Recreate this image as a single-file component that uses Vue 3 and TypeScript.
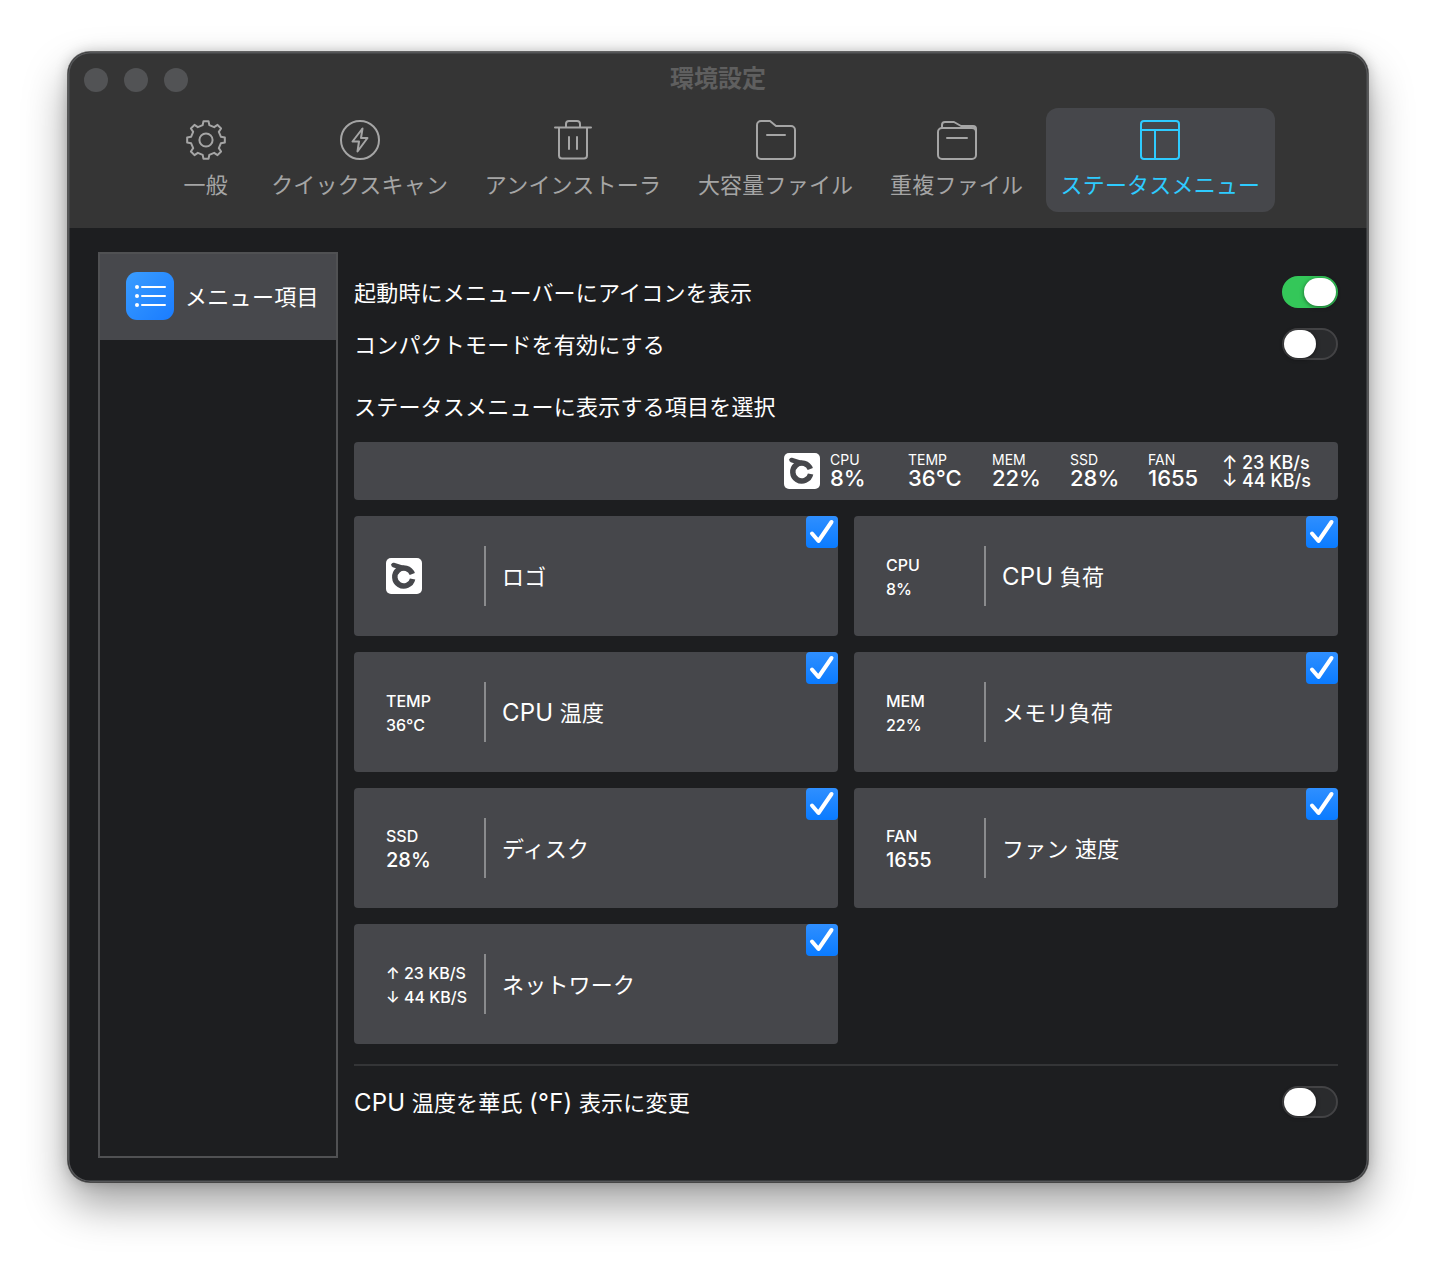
<script setup lang="ts">
interface Tab { label: string; icon: string; active?: boolean; wide?: boolean }
const tabs: Tab[] = [
  { label: '一般', icon: 'gear', wide: true },
  { label: 'クイックスキャン', icon: 'bolt' },
  { label: 'アンインストーラ', icon: 'trash' },
  { label: '大容量ファイル', icon: 'folder' },
  { label: '重複ファイル', icon: 'folders' },
  { label: 'ステータスメニュー', icon: 'layout', active: true },
]
interface Card { name: string; lat?: string; a?: string; b?: string; logo?: boolean; big?: boolean }
const cards: Card[] = [
  { name: 'ロゴ', logo: true },
  { lat: 'CPU', name: ' 負荷', a: 'CPU', b: '8%' },
  { lat: 'CPU', name: ' 温度', a: 'TEMP', b: '36°C' },
  { name: 'メモリ負荷', a: 'MEM', b: '22%' },
  { name: 'ディスク', a: 'SSD', b: '28%', big: true },
  { name: 'ファン 速度', a: 'FAN', b: '1655', big: true },
  { name: 'ネットワーク', a: '↑ 23 KB/S', b: '↓ 44 KB/S' },
]
const stats = [
  { k: 'CPU', v: '8%' },
  { k: 'TEMP', v: '36°C' },
  { k: 'MEM', v: '22%' },
  { k: 'SSD', v: '28%' },
  { k: 'FAN', v: '1655' },
]
function gearPath(): string {
  const cx = 20, cy = 20, n = 8
  const pts: string[] = []
  for (let i = 0; i < n; i++) {
    const base = (i / n) * Math.PI * 2 - Math.PI / 2
    const step = (Math.PI * 2) / n
    const list: [number, number][] = [
      [15.2, base - step * 0.28],
      [19, base - step * 0.17],
      [19, base + step * 0.17],
      [15.2, base + step * 0.28],
    ]
    for (const [r, t] of list) pts.push(`${(cx + r * Math.cos(t)).toFixed(2)} ${(cy + r * Math.sin(t)).toFixed(2)}`)
  }
  return 'M' + pts.join('L') + 'Z'
}
const gear = gearPath()
const logoRing = 'M26.300 16A9 9 0 1 0 26.600 21'
const logoTail = 'M7.500 7 17 10'
</script>

<template>
  <div class="stage">
    <div class="window">
      <header class="head">
        <div class="titlebar">
          <div class="lights"><i></i><i></i><i></i></div>
          <div class="title">環境設定</div>
        </div>
        <nav class="tabs">
          <div v-for="t in tabs" :key="t.label" class="tab" :class="{ active: t.active, wide: t.wide }">
            <svg class="ico" viewBox="0 0 40 40" fill="none" stroke="currentColor" stroke-width="2" stroke-linejoin="round" stroke-linecap="round">
              <template v-if="t.icon === 'gear'">
                <path :d="gear" />
                <circle cx="20" cy="20" r="6.6" />
              </template>
              <template v-else-if="t.icon === 'bolt'">
                <circle cx="20" cy="20" r="19" />
                <path d="M22.5 8.5 12.5 21.5h6.5l-1.5 10 10-13.5h-6.5z" />
              </template>
              <template v-else-if="t.icon === 'trash'">
                <path d="M2 7.5h36M6 7.5v28a3 3 0 0 0 3 3h22a3 3 0 0 0 3-3v-28M13 7.500V4a3 3 0 0 1 3-3h8a3 3 0 0 1 3 3v3.500M16 17v12M24 17v12" />
              </template>
              <template v-else-if="t.icon === 'folder'">
                <path d="M1 5a4 4 0 0 1 4-4h9l6 5h15a4 4 0 0 1 4 4v25a4 4 0 0 1-4 4H5a4 4 0 0 1-4-4zM11 15h18" />
              </template>
              <template v-else-if="t.icon === 'folders'">
                <path d="M1 12a4 4 0 0 1 4-4h30a4 4 0 0 1 4 4v23a4 4 0 0 1-4 4H5a4 4 0 0 1-4-4zM5 8V5a3 3 0 0 1 3-3h9l7 4h12a3 3 0 0 1 3 3v3M10 18h20" />
              </template>
              <template v-else>
                <rect x="1" y="1" width="38" height="38" rx="3" />
                <path d="M1 10h38M15 10v29" />
              </template>
            </svg>
            <span>{{ t.label }}</span>
          </div>
        </nav>
      </header>

      <main class="body">
        <aside class="side">
          <div class="side-item">
            <div class="list-ico">
              <svg viewBox="0 0 48 48" width="48" height="48" fill="none" stroke="#fff" stroke-width="2" stroke-linecap="round">
                <path d="M16 15h23M16 24h23M16 33h23" />
                <circle cx="11" cy="15" r="2" fill="#fff" stroke="none" />
                <circle cx="11" cy="24" r="2" fill="#fff" stroke="none" />
                <circle cx="11" cy="33" r="2" fill="#fff" stroke="none" />
              </svg>
            </div>
            <span class="side-label">メニュー項目</span>
          </div>
        </aside>

        <section class="content">
          <div class="row row-first">
            <span class="txt">起動時にメニューバーにアイコンを表示</span>
            <div class="toggle on"><b></b></div>
          </div>
          <div class="row row-second">
            <span class="txt">コンパクトモードを有効にする</span>
            <div class="toggle"><b></b></div>
          </div>
          <div class="sub">ステータスメニューに表示する項目を選択</div>

          <div class="preview">
            <svg class="logo" viewBox="0 0 36 36" fill="none" stroke="#46474b">
              <rect width="36" height="36" rx="5" fill="#fff" stroke="none" />
              <path :d="logoRing" stroke-width="5.500" />
              <path :d="logoTail" stroke-width="4.500" stroke-linecap="round" />
            </svg>
            <div v-for="s in stats" :key="s.k" class="stat">
              <small>{{ s.k }}</small>
              <strong>{{ s.v }}</strong>
            </div>
            <div class="net">
              <div><em>↑</em>23 KB/s</div>
              <div><em>↓</em>44 KB/s</div>
            </div>
          </div>

          <div class="grid">
            <div v-for="c in cards" :key="c.lat + c.name" class="card">
              <div class="card-left" :class="{ big: c.big, 'has-logo': c.logo }">
                <svg v-if="c.logo" class="logo" viewBox="0 0 36 36" fill="none" stroke="#46474b">
                  <rect width="36" height="36" rx="5" fill="#fff" stroke="none" />
                  <path :d="logoRing" stroke-width="5.500" />
                  <path :d="logoTail" stroke-width="4.500" stroke-linecap="round" />
                </svg>
                <template v-else>
                  <div class="l1">{{ c.a }}</div>
                  <div class="l2">{{ c.b }}</div>
                </template>
              </div>
              <div class="card-name"><span v-if="c.lat" class="lat">{{ c.lat }}</span>{{ c.name }}</div>
              <div class="check">
                <svg viewBox="0 0 32 32" width="32" height="32" fill="none" stroke="#fff" stroke-width="4" stroke-linecap="round" stroke-linejoin="round">
                  <path d="M6 17.500 12.500 25 25.500 6" />
                </svg>
              </div>
            </div>
          </div>

          <div class="row row-last">
            <span class="txt"><span class="lat">CPU</span> 温度を華氏 <span class="lat">(°F)</span> 表示に変更</span>
            <div class="toggle"><b></b></div>
          </div>
        </section>
      </main>
    </div>
  </div>
</template>

<style>
html, body { margin: 0; background: #fff; }
</style>

<style scoped>
.stage {
  width: 1436px;
  height: 1266px;
  padding: 52px 68px 84px;
  box-sizing: border-box;
  background: #fff;
  font-family: Inter, "Noto Sans CJK JP", sans-serif;
  overflow: hidden;
}
.window {
  height: 100%;
  border-radius: 22px;
  overflow: hidden;
  display: flex;
  flex-direction: column;
  background: #1d1e20;
  box-shadow: 0 0 0 1px rgba(0, 0, 0, 0.55), 0 22px 44px rgba(0, 0, 0, 0.38), 0 0 14px rgba(0, 0, 0, 0.22);
  position: relative;
}
.window::after {
  content: "";
  position: absolute;
  inset: 0;
  border-radius: 22px;
  box-shadow: inset 0 0 0 1.5px #555658;
  pointer-events: none;
}
.head {
  height: 176px;
  background: #353535;
  flex: none;
}
.titlebar {
  height: 56px;
  position: relative;
  display: flex;
  align-items: center;
  justify-content: center;
}
.lights {
  position: absolute;
  left: 16px;
  top: 16px;
  display: flex;
  gap: 16px;
}
.lights i {
  width: 24px;
  height: 24px;
  border-radius: 50%;
  background: #525355;
}
.title {
  color: #5f5f5f;
  font-size: 24px;
  line-height: 32px;
  font-weight: 700;
  margin-top: -2px;
}
.tabs {
  display: flex;
  gap: 8.75px;
  padding-left: 95px;
}
.tab {
  height: 104px;
  padding: 12px 14px 0;
  box-sizing: border-box;
  border-radius: 12px;
  display: flex;
  flex-direction: column;
  align-items: center;
  color: #a5a5a5;
  font-size: 22px;
  line-height: 32px;
  white-space: nowrap;
  letter-spacing: 0.2px;
}
.tab.wide { padding-left: 20.500px; padding-right: 20.500px; }
.tab.active {
  padding-left: 14.5px;
  padding-right: 14.5px;
  background: #46474b;
  color: #2ecbff;
}
.ico {
  width: 40px;
  height: 40px;
  margin-bottom: 9px;
  flex: none;
}
.body {
  flex: 1;
  display: flex;
  padding: 24px 30px 24px 30px;
  gap: 16px;
  min-height: 0;
}
.side {
  width: 240px;
  box-sizing: border-box;
  border: 2px solid #505153;
  flex: none;
}
.side-item {
  height: 86px;
  background: #47484c;
  display: flex;
  align-items: center;
  padding: 0 0 2px 26px;
  box-sizing: border-box;
  gap: 13px;
  color: #fff;
  font-size: 22px;
}
.side-label {
  margin-left: -2px;
  letter-spacing: 0.3px;
  position: relative;
  top: -1px;
}
.list-ico {
  width: 48px;
  height: 48px;
  border-radius: 11px;
  background: linear-gradient(135deg, #3a9dff, #1a7cff);
}
.list-ico svg { display: block; }
.content {
  flex: 1;
  min-width: 0;
  color: #fff;
  font-size: 22px;
  line-height: 32px;
  letter-spacing: 0.2px;
  display: flex;
  flex-direction: column;
}
.row {
  display: flex;
  justify-content: space-between;
  align-items: center;
  height: 32px;
}
.txt { position: relative; top: 1px; }
.lat { font-size: 24px; line-height: 1; }
.row-first { margin-top: 24px; }
.row-second { margin-top: 20px; }
.sub { margin-top: 31px; height: 32px; }
.toggle {
  width: 56px;
  height: 32px;
  box-sizing: border-box;
  border-radius: 16px;
  border: 2px solid #434345;
  background: #2a2b2d;
  position: relative;
}
.toggle b {
  position: absolute;
  left: 0;
  top: 0;
  width: 32px;
  height: 28px;
  border-radius: 14px;
  background: #fff;
  box-shadow: 0 1px 4px rgba(0, 0, 0, 0.5);
}
.toggle.on {
  background: #34c759;
  border-color: #34c759;
}
.toggle.on b { left: 20px; }
.preview {
  margin-top: 19px;
  height: 58px;
  border-radius: 4px;
  background: #46474b;
  display: grid;
  grid-template-columns: 46px 78px 84px 78px 78px 74px 116px;
  justify-content: end;
  align-items: center;
  letter-spacing: 0;
}
.logo {
  width: 36px;
  height: 36px;
  display: block;
}
.stat {
  display: flex;
  flex-direction: column;
  color: #fff;
}
.stat small {
  font-size: 14px;
  line-height: 14px;
}
.stat strong {
  font-size: 22px;
  line-height: 22px;
  font-weight: 500;
}
.net {
  font-size: 18px;
  line-height: 18px;
  font-weight: 500;
  position: relative;
  top: 1px;
}
.net em {
  font-style: normal;
  display: inline-block;
  width: 20px;
}
.grid {
  margin-top: 16px;
  display: grid;
  grid-template-columns: 484px 484px;
  grid-auto-rows: 120px;
  gap: 16px;
  padding-bottom: 20px;
  border-bottom: 2px solid #343537;
}
.card {
  position: relative;
  background: #46474b;
  border-radius: 4px;
  display: flex;
  align-items: center;
}
.card-left {
  width: 132px;
  height: 60px;
  box-sizing: border-box;
  padding-left: 32px;
  padding-top: 1px;
  border-right: 2px solid #8a8b8d;
  font-size: 16px;
  font-weight: 500;
  letter-spacing: 0;
  line-height: 24px;
  display: flex;
  flex-direction: column;
  justify-content: center;
  white-space: nowrap;
}
.card-left.big, .card-left.has-logo { padding-top: 0; }
.card-left.big .l2 { font-size: 20px; }
.card-name {
  margin-left: 16px;
  font-size: 22px;
  position: relative;
  top: 1px;
}
.check {
  position: absolute;
  top: 0;
  right: 0;
  width: 32px;
  height: 32px;
  border-radius: 4px;
  background: linear-gradient(180deg, #2f8fff, #0a7bff);
}
.check svg { display: block; }
.row-last { margin-top: 20px; }
</style>
